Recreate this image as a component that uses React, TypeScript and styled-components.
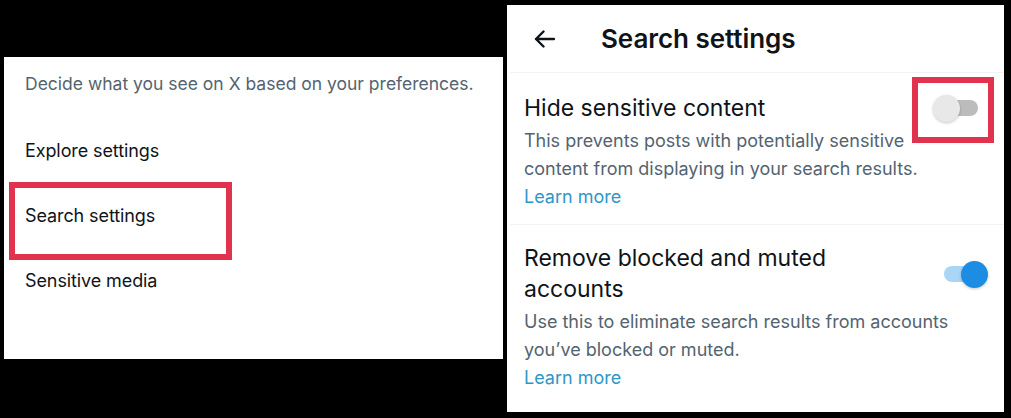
import React from 'react'
import styled, { createGlobalStyle } from 'styled-components'

const GlobalStyle = createGlobalStyle`
  html, body {
    margin: 0;
    padding: 0;
    background: #000;
  }
  body {
    font-family: Inter, 'Noto Sans', 'Liberation Sans', sans-serif;
    -webkit-font-smoothing: antialiased;
  }
`

const Page = styled.div`
  display: flex;
  align-items: flex-start;
  gap: 4px;
  width: 1011px;
  height: 418px;
  padding: 5px 7px 0 4px;
  box-sizing: border-box;
  background: #000;
`

const LeftPanel = styled.div`
  position: relative;
  margin-top: 52px;
  width: 499px;
  height: 302px;
  background: #fff;
  padding: 13px 0 0 21px;
  box-sizing: border-box;
`

const Intro = styled.p`
  margin: 0 0 20px;
  font-size: 17.5px;
  line-height: 28px;
  white-space: nowrap;
  color: #536471;
`

const MenuItem = styled.div`
  height: 65px;
  display: flex;
  align-items: center;
  font-size: 18px;
  letter-spacing: -0.1px;
  color: #0f1419;
`

const Highlight = styled.div<{ $top: number; $left: number; $w: number; $h: number }>`
  position: absolute;
  top: ${p => p.$top}px;
  left: ${p => p.$left}px;
  width: ${p => p.$w}px;
  height: ${p => p.$h}px;
  border: 6px solid #e1334d;
  box-sizing: border-box;
  pointer-events: none;
`

const RightPanel = styled.div`
  width: 497px;
  height: 407px;
  background: #fff;
  display: flex;
  flex-direction: column;
`

const Header = styled.div`
  height: 67px;
  display: flex;
  align-items: center;
  padding-left: 24px;
  border-bottom: 1px solid #eff3f4;
  margin-left: 3px;
`

const BackButton = styled.div`
  width: 21px;
  height: 18px;
  display: flex;
  margin-right: 46px;
`

const Title = styled.h1`
  margin: 0;
  font-size: 26px;
  font-weight: 600;
  color: #0f1419;
  letter-spacing: -0.05px;
`

const Section = styled.div<{ $last?: boolean }>`
  position: relative;
  margin-left: 3px;
  padding: ${p => (p.$last ? '18px' : '20px')} 16px 13px 14px;
  border-bottom: ${p => (p.$last ? 'none' : '1px solid #eff3f4')};
`

const SettingRow = styled.div`
  display: flex;
  align-items: center;
  justify-content: space-between;
  margin-bottom: 3px;
`

const SettingTitle = styled.div`
  max-width: 330px;
  font-size: 23px;
  line-height: 31px;
  color: #0f1419;
`

const Description = styled.p`
  margin: 0;
  font-size: 18px;
  line-height: 28px;
  color: #536471;
`

const LearnMore = styled.a`
  display: block;
  font-size: 18px;
  line-height: 28px;
  color: #2f96c9;
  text-decoration: none;
`

const Toggle = styled.div`
  position: relative;
  width: 55px;
  height: 27px;
  flex-shrink: 0;
`

const Track = styled.div<{ $on: boolean }>`
  position: absolute;
  left: 11px;
  top: 5px;
  width: 34px;
  height: 16px;
  border-radius: 8px;
  background: ${p => (p.$on ? '#a9d5f6' : '#bcbcbc')};
`

const Knob = styled.div<{ $on: boolean }>`
  position: absolute;
  top: 0;
  left: ${p => (p.$on ? '28px' : '0')};
  width: 27px;
  height: 27px;
  border-radius: 50%;
  background: ${p => (p.$on ? '#1d8de3' : '#e8e8e8')};
  box-shadow: 0 1px 3px rgba(0, 0, 0, 0.22);
`

const Switch: React.FC<{ on: boolean }> = ({ on }) => (
  <Toggle>
    <Track $on={on} />
    <Knob $on={on} />
  </Toggle>
)

export default function App() {
  return (
    <>
      <GlobalStyle />
      <Page>
        <LeftPanel>
          <Intro>Decide what you see on X based on your preferences.</Intro>
          <MenuItem>Explore settings</MenuItem>
          <MenuItem>Search settings</MenuItem>
          <MenuItem>Sensitive media</MenuItem>
          <Highlight $top={125} $left={5} $w={223} $h={78} />
        </LeftPanel>

        <RightPanel>
          <Header>
            <BackButton>
              <svg width="21" height="18" viewBox="0 0 21 18" fill="none">
                <path
                  d="M20 9H2M9.5 1.5L2 9l7.5 7.5"
                  stroke="#0f1419"
                  strokeWidth="2.4"
                  strokeLinecap="round"
                  strokeLinejoin="round"
                />
              </svg>
            </BackButton>
            <Title>Search settings</Title>
          </Header>

          <Section>
            <SettingRow>
              <SettingTitle>Hide sensitive content</SettingTitle>
              <Switch on={false} />
            </SettingRow>
            <Description>
              This prevents posts with potentially sensitive
              <br />
              content from displaying in your search results.
            </Description>
            <LearnMore>Learn more</LearnMore>
            <Highlight $top={4} $left={402} $w={82} $h={66} />
          </Section>

          <Section $last>
            <SettingRow>
              <SettingTitle>Remove blocked and muted accounts</SettingTitle>
              <Switch on />
            </SettingRow>
            <Description>
              Use this to eliminate search results from accounts
              <br />
              you’ve blocked or muted.
            </Description>
            <LearnMore>Learn more</LearnMore>
          </Section>
        </RightPanel>
      </Page>
    </>
  )
}
